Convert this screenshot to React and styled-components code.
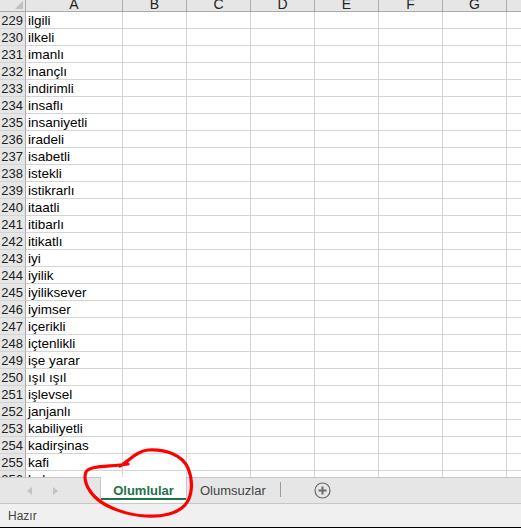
import React from 'react';
import styled, { createGlobalStyle } from 'styled-components';

const Global = createGlobalStyle`
  html, body { margin: 0; padding: 0; background: #fff; overflow: hidden; }
  body { font-family: "Liberation Sans", Arial, sans-serif; }
`;

const Window = styled.div`
  position: relative;
  width: 521px;
  height: 528px;
  display: flex;
  flex-direction: column;
  overflow: hidden;
`;

const Sheet = styled.div`
  flex: 1;
  overflow: hidden;
  display: grid;
  grid-template-columns: 26px 97px repeat(7, 64px);
  grid-auto-rows: 17px;
  grid-template-rows: 12px;
  align-content: start;
`;

const Corner = styled.div`
  position: relative;
  background: #e6e6e6;
  border-right: 1px solid #ababab;
  border-bottom: 1px solid #ababab;
  box-sizing: border-box;
  &::after {
    content: '';
    position: absolute;
    right: 2px;
    bottom: 2px;
    border-left: 8px solid transparent;
    border-bottom: 8px solid #c0c0c0;
  }
`;

const ColHead = styled.div`
  background: #e6e6e6;
  border-right: 1px solid #ababab;
  border-bottom: 1px solid #ababab;
  box-sizing: border-box;
  display: flex;
  align-items: flex-end;
  justify-content: center;
  overflow: hidden;
  font-size: 14px;
  line-height: 14px;
  color: #222;
  span { margin-bottom: 0px; }
`;

const RowHead = styled.div`
  background: #e6e6e6;
  border-right: 1px solid #ababab;
  border-bottom: 1px solid #d4d4d4;
  box-sizing: border-box;
  text-align: right;
  padding-right: 2px;
  font-size: 13px;
  line-height: 17px;
  color: #222;
  white-space: nowrap;
`;

const Cell = styled.div`
  border-right: 1px solid #d4d4d4;
  border-bottom: 1px solid #d4d4d4;
  box-sizing: border-box;
  padding-left: 2px;
  font-size: 13.5px;
  line-height: 17px;
  color: #000;
  white-space: nowrap;
  overflow: visible;
`;

const TabBar = styled.div`
  height: 27px;
  flex: none;
  background: #e6e6e6;
  border-top: 1px solid #c6c6c6;
  border-bottom: 1px solid #c6c6c6;
  box-sizing: border-box;
  display: flex;
  align-items: stretch;
`;

const Nav = styled.div`
  width: 100px;
  display: flex;
  align-items: center;
  padding-left: 27px;
  gap: 21px;
  box-sizing: border-box;
`;

const Arrow = styled.span`
  width: 0;
  height: 0;
  border-top: 4px solid transparent;
  border-bottom: 4px solid transparent;
  ${p => (p.$dir === 'left' ? 'border-right: 5px solid #c3c3c3;' : 'border-left: 5px solid #c3c3c3;')}
`;

const Tab = styled.div`
  display: flex;
  align-items: center;
  justify-content: center;
  box-sizing: border-box;
  font-size: 13px;
  padding: 0 ${p => (p.$active ? '12px' : '0')};
  ${p =>
    p.$active
      ? `
    width: 87px;
    margin-top: -1px;
    background: #fff;
    border-left: 1px solid #c6c6c6;
    border-right: 1px solid #c6c6c6;
    color: #217346;
    font-weight: bold;
    box-shadow: inset 0 -3px 0 #fff, inset 0 -5px 0 #217346;
  `
      : `
    margin-left: 13px;
    color: #444;
  `}
`;

const Divider = styled.div`
  width: 1px;
  background: #9a9a9a;
  margin: 4px 0 6px 14px;
`;

const AddBtn = styled.div`
  margin-left: 33px;
  display: flex;
  align-items: center;
`;

const StatusBar = styled.div`
  height: 24px;
  flex: none;
  background: #f0f0f0;
  border-bottom: 1px solid #000;
  box-sizing: border-box;
  display: flex;
  align-items: center;
  padding-left: 8px;
  font-size: 12px;
  color: #444;
`;

const Annotation = styled.svg`
  position: absolute;
  left: 0;
  top: 0;
  pointer-events: none;
`;

const words = [
  'ilgili', 'ilkeli', 'imanlı', 'inançlı', 'indirimli', 'insaflı', 'insaniyetli',
  'iradeli', 'isabetli', 'istekli', 'istikrarlı', 'itaatli', 'itibarlı', 'itikatlı',
  'iyi', 'iyilik', 'iyiliksever', 'iyimser', 'içerikli', 'içtenlikli', 'işe yarar',
  'ışıl ışıl', 'işlevsel', 'janjanlı', 'kabiliyetli', 'kadirşinas', 'kafi', 'kalıcı',
];

const cols = ['A', 'B', 'C', 'D', 'E', 'F', 'G', 'H'];

export default function App() {
  return (
    <Window>
      <Global />
      <Sheet>
        <Corner />
        {cols.map(c => (
          <ColHead key={c}><span>{c}</span></ColHead>
        ))}
        {words.map((w, i) => (
          <React.Fragment key={i}>
            <RowHead>{229 + i}</RowHead>
            <Cell>{w}</Cell>
            {cols.slice(1).map(c => <Cell key={c} />)}
          </React.Fragment>
        ))}
      </Sheet>
      <TabBar>
        <Nav>
          <Arrow $dir="left" />
          <Arrow $dir="right" />
        </Nav>
        <Tab $active>Olumlular</Tab>
        <Tab>Olumsuzlar</Tab>
        <Divider />
        <AddBtn>
          <svg width="17" height="17" viewBox="0 0 17 17">
            <circle cx="8.5" cy="8.5" r="7.5" fill="none" stroke="#6b6b6b" strokeWidth="1.2" />
            <path d="M8.5 4.5v8M4.5 8.5h8" stroke="#6b6b6b" strokeWidth="2" />
          </svg>
        </AddBtn>
      </TabBar>
      <StatusBar>Hazır</StatusBar>
      <Annotation width="521" height="528">
        <path
          d="M120 466 C 128 462, 136 451, 148 450 C 166 449, 182 455, 188 468 C 193 480, 193 496, 185 505 C 177 514, 161 517, 146 516 C 126 515, 105 507, 95 497 C 87 489, 83 479, 86 472 C 90 465, 108 467, 128 464"
          fill="none"
          stroke="#ff0000"
          strokeWidth="3.2"
          strokeLinecap="round"
        />
      </Annotation>
    </Window>
  );
}
